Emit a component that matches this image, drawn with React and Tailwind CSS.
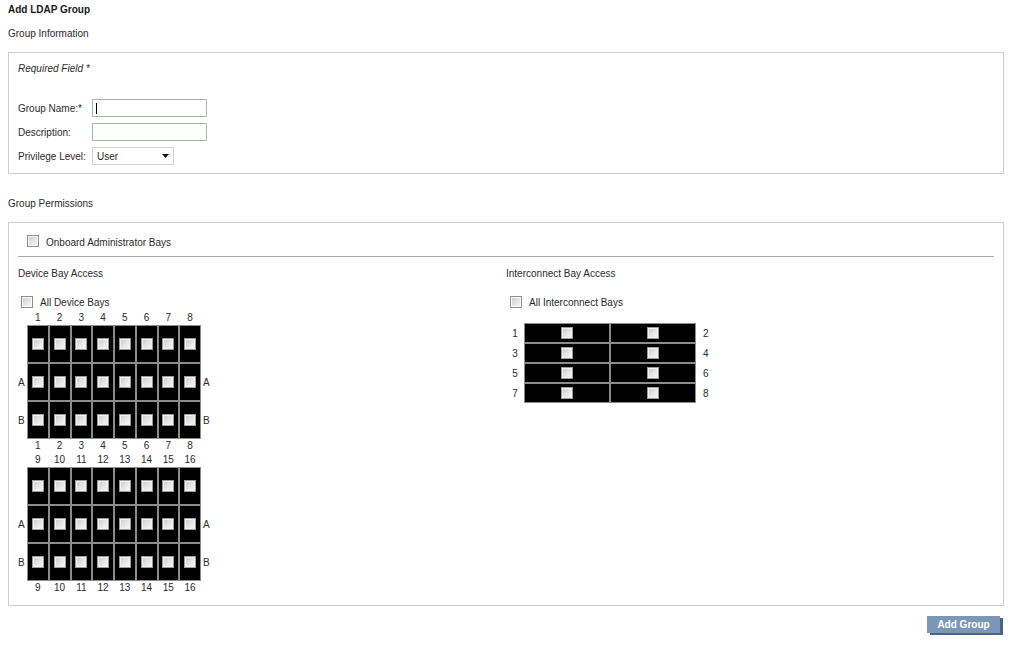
import React from 'react';

// ── Small pieces ──────────────────────────────────────────────────────────────
const Check = ({ dark }) => (
  <span
    className={
      'block w-[12px] h-[12px] border bg-gradient-to-br from-[#c8c8c8] via-[#e4e4e4] to-[#f7f7f7] ' +
      (dark ? 'border-[#9a9a9a] shadow-[inset_0_0_0_1px_#f2f2f2]' : 'border-[#8e8e8e] shadow-[inset_0_0_0_1px_#fafafa]')
    }
  />
);

const Field = ({ label, children }) => (
  <div className="flex items-center h-[18px]">
    <span className="w-[74px] whitespace-nowrap">{label}</span>
    {children}
  </div>
);

// ── Device bays: label row, 3 bay rows (full, A, B), label row ───────────────
const BayBlock = ({ nums }) => {
  const rows = ['', 'A', 'B'];
  return (
    <div className="grid grid-cols-[9px_repeat(8,21.75px)_20px]">
      <span />
      {nums.map((n) => (
        <span key={'t' + n} className="h-[14px] leading-[14px] text-center">{n}</span>
      ))}
      <span />
      {rows.map((r) => (
        <React.Fragment key={'r' + r}>
          <span className="h-[38px] flex items-center">{r}</span>
          {nums.map((n) => (
            <span key={r + n} className="h-[38px] bg-black border border-[#8c8c8c] flex items-center justify-center">
              <Check dark />
            </span>
          ))}
          <span className="h-[38px] flex items-center pl-[2px]">{r}</span>
        </React.Fragment>
      ))}
      <span />
      {nums.map((n) => (
        <span key={'b' + n} className="h-[14px] leading-[14px] text-center">{n}</span>
      ))}
      <span />
    </div>
  );
};

// ── Component ─────────────────────────────────────────────────────────────────
const App = () => {
  const top = [1, 2, 3, 4, 5, 6, 7, 8];
  const bottom = [9, 10, 11, 12, 13, 14, 15, 16];
  const ic = [[1, 2], [3, 4], [5, 6], [7, 8]];

  return (
    <div className="w-[1024px] h-[651px] bg-white pl-2 pr-[20px] font-['Liberation_Sans',Arial,sans-serif] text-[10px] text-[#2b2b2b] overflow-hidden">
      <h1 className="pt-[3px] leading-[13px] font-bold text-[#1a1a1a]">Add LDAP Group</h1>
      <h2 className="mt-[11px] leading-[13px]">Group Information</h2>

      {/* Group information */}
      <div className="mt-[12px] h-[122px] border border-[#cfcfcf] pl-[9px] pt-[9px]">
        <p className="italic leading-[13px]">Required Field *</p>
        <div className="mt-[24px] flex flex-col gap-[6px]">
          <Field label="Group Name:*">
            <span className="w-[115px] h-[18px] border border-[#a7b8a7] bg-white flex items-center pl-[3px]">
              <span className="w-px h-[11px] bg-black" />
            </span>
          </Field>
          <Field label="Description:">
            <span className="w-[115px] h-[18px] border border-[#a7b8a7] bg-white" />
          </Field>
          <Field label="Privilege Level:">
            <span className="w-[82px] h-[18px] border border-[#d2d2d2] bg-white flex items-center justify-between pl-[4px] pr-[4px]">
              <span>User</span>
              <svg width="7" height="4" viewBox="0 0 7 4"><path d="M0 0h7L3.5 4z" fill="#111" /></svg>
            </span>
          </Field>
        </div>
      </div>

      <h2 className="mt-[23px] leading-[13px]">Group Permissions</h2>

      {/* Group permissions */}
      <div className="mt-[12px] h-[384px] border border-[#cfcfcf] px-[9px] pt-[11px]">
        <label className="flex items-center h-[14px] pl-[9px] gap-[7px]">
          <Check />
          <span className="pt-[2px]">Onboard Administrator Bays</span>
        </label>
        <div className="mt-[8px] h-px bg-[#a9a9a9]" />

        <div className="grid grid-cols-2 mt-[10px]">
          {/* Device bays */}
          <div>
            <p className="leading-[14px]">Device Bay Access</p>
            <label className="mt-[14px] flex items-center h-[14px] pl-[3px] gap-[7px]">
              <Check />
              <span className="pt-[1px]">All Device Bays</span>
            </label>
            <div className="mt-[2px]">
              <BayBlock nums={top} />
              <BayBlock nums={bottom} />
            </div>
          </div>

          {/* Interconnect bays */}
          <div>
            <p className="leading-[14px]">Interconnect Bay Access</p>
            <label className="mt-[14px] flex items-center h-[14px] pl-[4px] gap-[7px]">
              <Check />
              <span className="pt-[1px]">All Interconnect Bays</span>
            </label>
            <div className="mt-[14px] grid grid-cols-[18px_86px_86px_30px]">
              {ic.map(([l, r]) => (
                <React.Fragment key={l}>
                  <span className="h-[20px] flex items-center justify-center">{l}</span>
                  <span className="h-[20px] bg-black border border-[#8c8c8c] flex items-center justify-center">
                    <Check dark />
                  </span>
                  <span className="h-[20px] bg-black border border-[#8c8c8c] flex items-center justify-center">
                    <Check dark />
                  </span>
                  <span className="h-[20px] flex items-center pl-[7px]">{r}</span>
                </React.Fragment>
              ))}
            </div>
          </div>
        </div>
      </div>

      <div className="flex justify-end mt-[10px] pr-[4px]">
        <button className="w-[73px] h-[17px] bg-[#7c96b6] text-white font-bold leading-[17px] shadow-[3px_2px_0_#46668c]">
          Add Group
        </button>
      </div>
    </div>
  );
};

export default App;
